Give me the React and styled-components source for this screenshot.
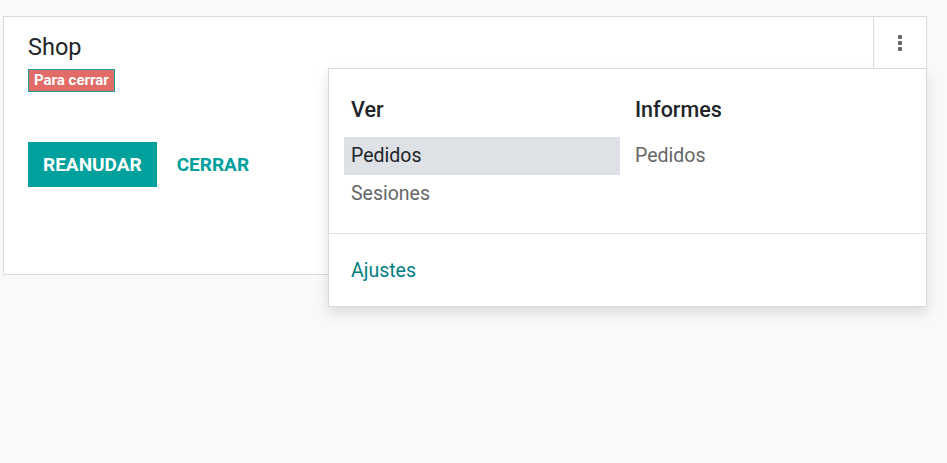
import React from "react";
import styled, { createGlobalStyle } from "styled-components";

const Global = createGlobalStyle`
  html, body { margin: 0; padding: 0; background: #f9f9f9; }
  body { font-family: Roboto, "Noto Sans", "Liberation Sans", sans-serif; color: #212529; }
  * { box-sizing: border-box; }
`;

const Page = styled.div`
  width: 947px;
  height: 463px;
  padding: 16px 20px 0 3px;
`;

const Card = styled.div`
  position: relative;
  width: 924px;
  height: 259px;
  background: #fff;
  border: 1px solid #d8dadd;
  padding: 16px 24px 0 24px;
`;

const Title = styled.div`
  font-size: 23.5px;
  line-height: 29px;
  font-weight: 400;
  color: #212529;
`;

const Badge = styled.span`
  display: inline-block;
  margin-top: 7px;
  background: #e06b67;
  border: 1px solid #17a2a0;
  color: #fff;
  font-weight: 700;
  font-size: 15px;
  line-height: 21px;
  padding: 0 5px;
`;

const Actions = styled.div`
  display: flex;
  align-items: center;
  gap: 20px;
  margin-top: 50px;
`;

const PrimaryButton = styled.button`
  height: 45px;
  padding: 0 15px;
  border: none;
  background: #00a09d;
  color: #fff;
  font-family: inherit;
  font-weight: 700;
  font-size: 19px;
  text-transform: uppercase;
`;

const LinkButton = styled.button`
  height: 45px;
  padding: 0;
  border: none;
  background: transparent;
  color: #00a09d;
  font-family: inherit;
  font-weight: 700;
  font-size: 19px;
  text-transform: uppercase;
`;

const Toggle = styled.div`
  position: absolute;
  top: -1px;
  right: -1px;
  width: 54px;
  height: 53px;
  border: 1px solid #d8dadd;
  display: flex;
  flex-direction: column;
  align-items: center;
  justify-content: center;
  gap: 2px;
  background: #fff;
  z-index: 2;
`;

const Dot = styled.span`
  width: 4px;
  height: 4px;
  border-radius: 1px;
  background: #666;
`;

const Menu = styled.div`
  position: absolute;
  top: 51px;
  right: -1px;
  width: 599px;
  background: #fff;
  border: 1px solid #d8dadd;
  box-shadow: 0 6px 12px rgba(0, 0, 0, 0.12);
  z-index: 1;
`;

const Columns = styled.div`
  display: grid;
  grid-template-columns: 276px 1fr;
  column-gap: 8px;
  padding: 22px 16px 20px 15px;
`;

const Column = styled.div`
  display: flex;
  flex-direction: column;
`;

const Header = styled.div`
  font-size: 21.5px;
  font-weight: 500;
  line-height: 38px;
  padding-left: 7px;
  margin-bottom: 8px;
  color: #212529;
`;

const Item = styled.div`
  font-size: 19.5px;
  line-height: 38px;
  padding-left: 7px;
  color: ${(p) => (p.$active ? "#212529" : "#666")};
  background: ${(p) => (p.$active ? "#dee1e5" : "transparent")};
`;

const Footer = styled.div`
  border-top: 1px solid #dee2e6;
  padding: 18px 16px 16px 15px;
`;

const FooterLink = styled.div`
  font-size: 19.5px;
  line-height: 38px;
  padding-left: 7px;
  color: #017e84;
`;

export default function App() {
  return (
    <>
      <Global />
      <Page>
        <Card>
          <Title>Shop</Title>
          <Badge>Para cerrar</Badge>
          <Actions>
            <PrimaryButton>Reanudar</PrimaryButton>
            <LinkButton>Cerrar</LinkButton>
          </Actions>
          <Toggle>
            <Dot />
            <Dot />
            <Dot />
          </Toggle>
          <Menu>
            <Columns>
              <Column>
                <Header>Ver</Header>
                <Item $active>Pedidos</Item>
                <Item>Sesiones</Item>
              </Column>
              <Column>
                <Header>Informes</Header>
                <Item>Pedidos</Item>
              </Column>
            </Columns>
            <Footer>
              <FooterLink>Ajustes</FooterLink>
            </Footer>
          </Menu>
        </Card>
      </Page>
    </>
  );
}
